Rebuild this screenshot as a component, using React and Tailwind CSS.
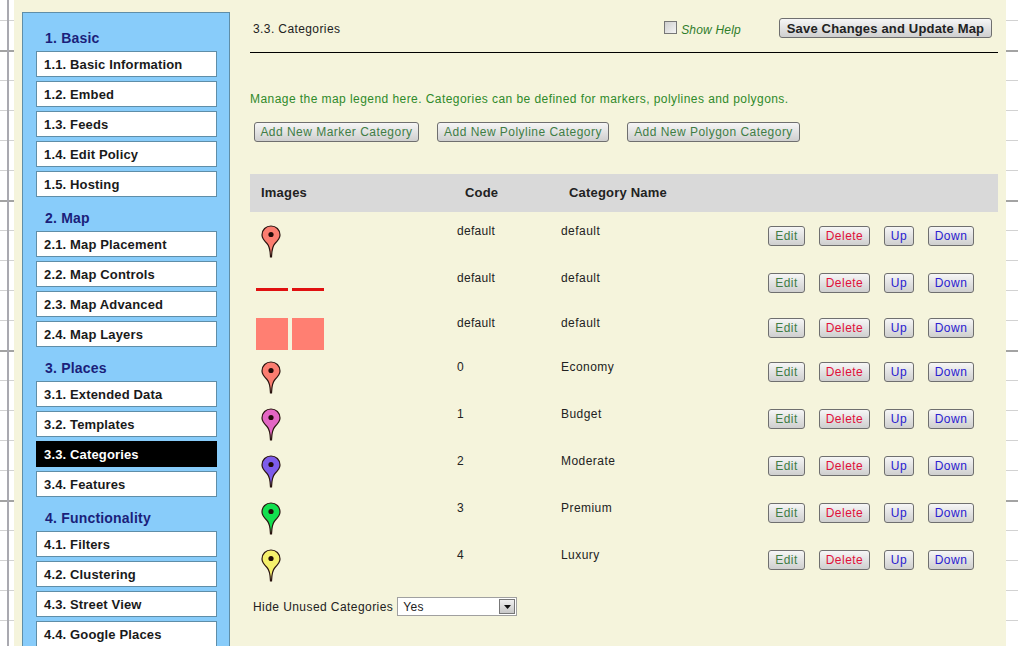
import React from 'react';

const sections = [
  { title: '1. Basic', items: ['1.1. Basic Information', '1.2. Embed', '1.3. Feeds', '1.4. Edit Policy', '1.5. Hosting'] },
  { title: '2. Map', items: ['2.1. Map Placement', '2.2. Map Controls', '2.3. Map Advanced', '2.4. Map Layers'] },
  { title: '3. Places', items: ['3.1. Extended Data', '3.2. Templates', '3.3. Categories', '3.4. Features'] },
  { title: '4. Functionality', items: ['4.1. Filters', '4.2. Clustering', '4.3. Street View', '4.4. Google Places'] },
];

const rows = [
  { type: 'pin', color: '#fb7d70', code: 'default', name: 'default', height: 'h-[47px]' },
  { type: 'line', code: 'default', name: 'default', height: 'h-[45px]' },
  { type: 'poly', code: 'default', name: 'default', height: 'h-[44px]' },
  { type: 'pin', color: '#fb7d70', code: '0', name: 'Economy', height: 'h-[47px]' },
  { type: 'pin', color: '#e366c4', code: '1', name: 'Budget', height: 'h-[47px]' },
  { type: 'pin', color: '#7d5ceb', code: '2', name: 'Moderate', height: 'h-[47px]' },
  { type: 'pin', color: '#12e04f', code: '3', name: 'Premium', height: 'h-[47px]' },
  { type: 'pin', color: '#f5f06c', code: '4', name: 'Luxury', height: 'h-[47px]' },
];

function Pin({ color }) {
  return (
    <svg width="20" height="33" viewBox="0 0 20 33" className="ml-[11px] -mt-[1px]">
      <path
        d="M10 1C5 1 1 4.800 1 10c0 3.500 2.500 6 5 8.500 2 2 3.200 5.500 3.500 13.500h1c.3-8 1.500-11.500 3.500-13.500 2.500-2.500 5-5 5-8.500C19 4.800 15 1 10 1z"
        fill={color}
        stroke="#2a1410"
        strokeWidth="1.2"
      />
      <circle cx="10" cy="9.500" r="2.600" fill="#200a08" />
    </svg>
  );
}

function RowImage({ row }) {
  if (row.type === 'line') {
    return (
      <div className="flex gap-1 ml-[6px] mt-[15px]">
        <div className="w-8 h-[3px] bg-[#e01010]" />
        <div className="w-8 h-[3px] bg-[#e01010]" />
      </div>
    );
  }
  if (row.type === 'poly') {
    return (
      <div className="flex gap-1 ml-[6px]">
        <div className="w-8 h-8 bg-[#ff7f72]" />
        <div className="w-8 h-8 bg-[#ff7f72]" />
      </div>
    );
  }
  return <Pin color={row.color} />;
}

function Btn({ className, children }) {
  return (
    <button className={`h-[20px] border border-[#6f6f6f] rounded-[3px] bg-gradient-to-b from-[#f6f6f6] to-[#cfcfcf] text-[12px] leading-none font-['Liberation_Sans',sans-serif] tracking-[0.47px] ${className}`}>
      {children}
    </button>
  );
}

export default function App() {
  return (
    <div className="h-[646px] overflow-hidden flex bg-white font-['Liberation_Sans',sans-serif] text-[12px] bg-[linear-gradient(#a3a3a3_2px,transparent_2px),linear-gradient(#d2d2d2_1px,transparent_1px)] bg-[length:100%_150px,100%_30px] bg-[position:0_50px,0_20px]">
      <div className="w-[14px] shrink-0 flex pl-[7px]">
        <div className="w-[2px] bg-[#a9a9b0]" />
      </div>
      <div className="w-[992px] shrink-0 flex bg-[#f5f4dc] pl-2 pt-3">
        <nav className="w-[208px] shrink-0 h-[700px] bg-[#88ccfa] border border-[#5f8ea8] pl-[13px] pr-3 pt-[15px]">
          {sections.map((s) => (
            <div key={s.title} className="mb-[11px]">
              <h2 className="h-[20px] pl-[9px] text-[14px] leading-[20px] font-bold text-[#1b1f7a] tracking-[0.2px]">{s.title}</h2>
              <div className="flex flex-col gap-1 mt-[3px]">
                {s.items.map((item) => (
                  <div
                    key={item}
                    className={
                      item === '3.3. Categories'
                        ? 'h-[26px] pl-2 text-[13px] leading-[27px] font-bold tracking-[0.15px] bg-black text-white'
                        : 'h-[26px] pl-[7px] text-[13px] leading-[25px] font-bold tracking-[0.15px] bg-white text-[#1a1a1a] border border-[#5f8ea8]'
                    }
                  >
                    {item}
                  </div>
                ))}
              </div>
            </div>
          ))}
        </nav>

        <main className="w-[748px] ml-5 shrink-0">
          <div className="h-[41px] border-b border-black flex">
            <div className="pl-[3px] pt-[8px] text-[#222] tracking-[0.4px]">3.3. Categories</div>
            <div className="ml-auto flex items-start pt-[9px]">
              <span className="w-[13px] h-[13px] border border-[#777] bg-gradient-to-br from-[#cfcfcf] to-[#f4f4f4]" />
              <span className="ml-1 italic text-[#2f7d2a] tracking-[0.2px]">Show Help</span>
            </div>
            <button className="ml-[38px] mr-[6px] mt-[6px] w-[213px] h-[20px] border border-[#6f6f6f] rounded-[3px] bg-gradient-to-b from-[#f6f6f6] to-[#cfcfcf] text-[13px] leading-none font-bold text-[#222] tracking-[0.17px]">
              Save Changes and Update Map
            </button>
          </div>

          <p className="mt-[39px] h-[14px] leading-[14px] text-[#2f8a2a] tracking-[0.44px]">
            Manage the map legend here. Categories can be defined for markers, polylines and polygons.
          </p>

          <div className="flex gap-[18px] mt-[16px] pl-1">
            <Btn className="w-[165px] text-[#3f7d45]">Add New Marker Category</Btn>
            <Btn className="w-[172px] text-[#3f7d45]">Add New Polyline Category</Btn>
            <Btn className="w-[173px] text-[#3f7d45]">Add New Polygon Category</Btn>
          </div>

          <div className="mt-[32px] h-[38px] bg-[#d9d9d9] flex items-center font-bold text-[13px] text-[#222] tracking-[0.2px]">
            <div className="w-[215px] pl-[11px]">Images</div>
            <div className="w-[104px]">Code</div>
            <div>Category Name</div>
          </div>

          <div className="pt-3">
            {rows.map((row, i) => (
              <div key={i} className={`flex ${row.height}`}>
                <div className="w-[207px] pt-[2px]">
                  <RowImage row={row} />
                </div>
                <div className="w-[104px] text-[#222] leading-[14px] tracking-[0.3px]">{row.code}</div>
                <div className="w-[207px] text-[#222] leading-[14px] tracking-[0.45px]">{row.name}</div>
                <div className="flex gap-[14px] pt-[2px] items-start">
                  <Btn className="w-[37px] text-[#3f7d45]">Edit</Btn>
                  <Btn className="w-[51px] text-[#e0103a]">Delete</Btn>
                  <Btn className="w-[30px] text-[#2a20d0]">Up</Btn>
                  <Btn className="w-[46px] text-[#2a20d0]">Down</Btn>
                </div>
              </div>
            ))}
          </div>

          <div className="flex items-center mt-[2px] pl-[3px]">
            <span className="text-[#222] tracking-[0.43px]">Hide Unused Categories</span>
            <div className="ml-1 w-[120px] h-[19px] border border-[#a0a0a0] bg-white flex items-center justify-between pl-[5px] pr-[1px] text-[#222] tracking-[0.4px]">
              <span>Yes</span>
              <span className="w-[16px] h-[15px] border border-[#777] bg-gradient-to-b from-[#f0f0f0] to-[#c8c8c8] flex items-center justify-center">
                <svg width="7" height="4" viewBox="0 0 7 4"><path d="M0 0h7L3.500 4z" fill="#111" /></svg>
              </span>
            </div>
          </div>
        </main>
      </div>
    </div>
  );
}
